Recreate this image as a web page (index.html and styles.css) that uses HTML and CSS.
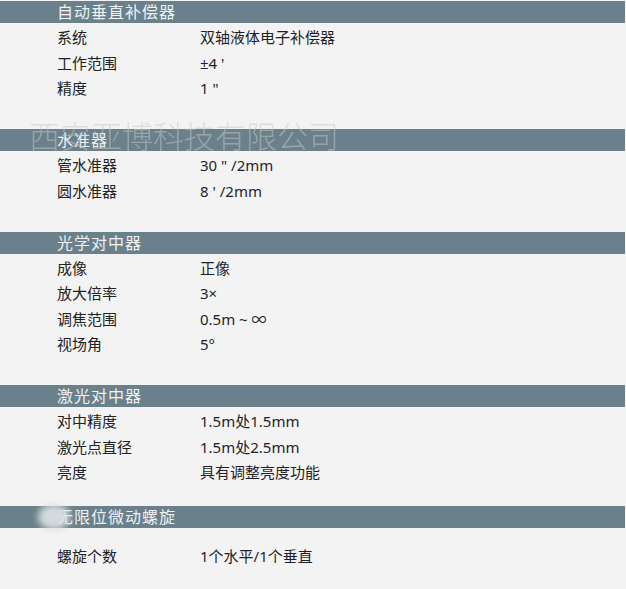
FILE: index.html
```html
<!DOCTYPE html>
<html lang="zh">
<head>
<meta charset="utf-8">
<title>参数</title>
<link rel="stylesheet" href="styles.css">
</head>
<body>
<div class="page">
  <section class="sec">
    <h2 class="bar">自动垂直补偿器</h2>
    <div class="rows">
      <div class="row"><span class="k">系统</span><span class="v">双轴液体电子补偿器</span></div>
      <div class="row"><span class="k">工作范围</span><span class="v">±4 '</span></div>
      <div class="row"><span class="k">精度</span><span class="v">1 "</span></div>
    </div>
  </section>
  <section class="sec">
    <h2 class="bar">水准器</h2>
    <div class="rows">
      <div class="row"><span class="k">管水准器</span><span class="v">30 " /2mm</span></div>
      <div class="row"><span class="k">圆水准器</span><span class="v">8 ' /2mm</span></div>
    </div>
  </section>
  <section class="sec">
    <h2 class="bar">光学对中器</h2>
    <div class="rows">
      <div class="row"><span class="k">成像</span><span class="v">正像</span></div>
      <div class="row"><span class="k">放大倍率</span><span class="v">3×</span></div>
      <div class="row"><span class="k">调焦范围</span><span class="v">0.5m ~ ∞</span></div>
      <div class="row"><span class="k">视场角</span><span class="v">5°</span></div>
    </div>
  </section>
  <section class="sec">
    <h2 class="bar">激光对中器</h2>
    <div class="rows rows-short">
      <div class="row"><span class="k">对中精度</span><span class="v">1.5m处1.5mm</span></div>
      <div class="row"><span class="k">激光点直径</span><span class="v">1.5m处2.5mm</span></div>
      <div class="row"><span class="k">亮度</span><span class="v">具有调整亮度功能</span></div>
    </div>
  </section>
  <section class="sec sec-last">
    <h2 class="bar">无限位微动螺旋<span class="smudge"></span></h2>
    <div class="rows rows-last">
      <div class="row"><span class="k">螺旋个数</span><span class="v">1个水平/1个垂直</span></div>
    </div>
  </section>
  <div class="watermark">西安亚博科技有限公司</div>
</div>
</body>
</html>
```

FILE: styles.css
```css
html, body {
  margin: 0;
  padding: 0;
  background: #f4f3f3;
}
body {
  font-family: "Noto Sans", "Noto Sans CJK SC", sans-serif;
  color: #222;
}
.page {
  position: relative;
  width: 625px;
  height: 589px;
  padding-top: 1px;
  box-sizing: border-box;
  overflow: hidden;
  background: #f4f3f3;
}
.bar {
  position: relative;
  margin: 0;
  height: 22px;
  line-height: 22px;
  background: #6a808a;
  color: #eef2f4;
  font-weight: normal;
  font-size: 16px;
  letter-spacing: 1px;
  padding-left: 57px;
}
.rows {
  padding: 2px 0 27.5px 0;
}
.rows-short {
  padding-bottom: 20.5px;
}
.rows-last {
  padding-top: 16px;
}
.row {
  display: flex;
  height: 25.5px;
  line-height: 25.5px;
  font-size: 15px;
}
.k {
  width: 143px;
  padding-left: 57px;
}
.v {
  color: #1f1f2a;
}
.smudge {
  position: absolute;
  left: 38px;
  top: -2px;
  width: 32px;
  height: 26px;
  border-radius: 50%;
  background: #d9dfe1;
  filter: blur(3.5px);
  opacity: 0.95;
}
.watermark {
  position: absolute;
  left: 29px;
  top: 116px;
  font-size: 31px;
  line-height: 38px;
  color: #c8c8c8;
  opacity: 0.5;
  white-space: nowrap;
  font-family: "Noto Sans CJK SC", sans-serif;
  font-weight: 300;
}
```
